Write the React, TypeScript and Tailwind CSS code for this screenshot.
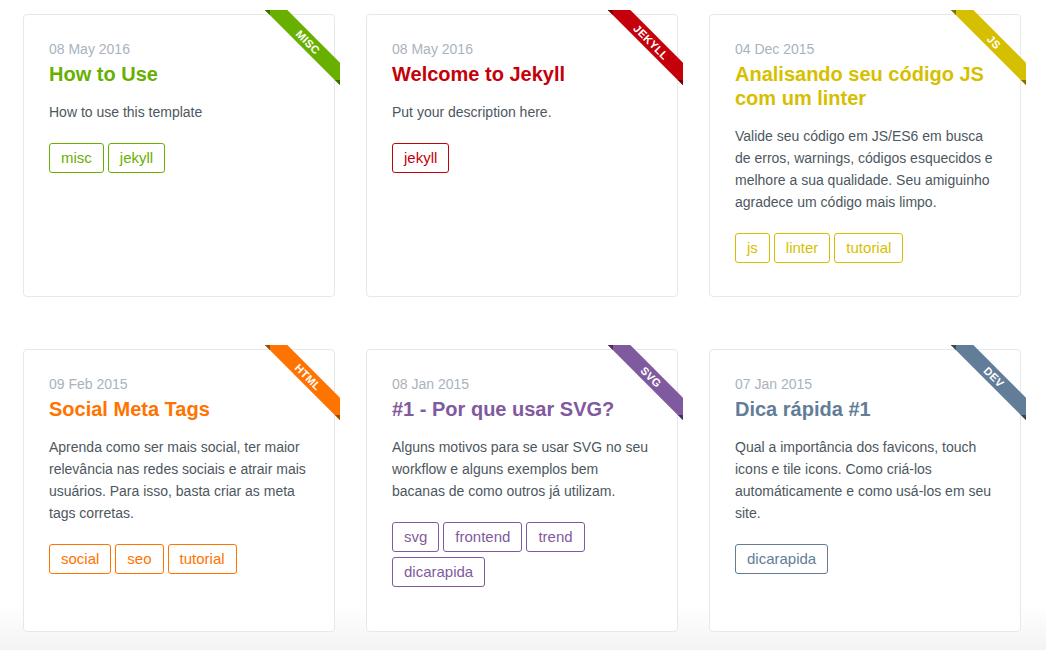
type Post = {
  date: string;
  title: string;
  description: string;
  tags: string[];
  ribbon: string;
  text: string;
  border: string;
  band: string;
  fold: string;
};

const posts: Post[] = [
  {
    date: "08 May 2016",
    title: "How to Use",
    description: "How to use this template",
    tags: ["misc", "jekyll"],
    ribbon: "MISC",
    text: "text-[#67b000]",
    border: "border-[#67b000]",
    band: "bg-[#67b000]",
    fold: "bg-[#3d6a00]",
  },
  {
    date: "08 May 2016",
    title: "Welcome to Jekyll",
    description: "Put your description here.",
    tags: ["jekyll"],
    ribbon: "JEKYLL",
    text: "text-[#c4000a]",
    border: "border-[#c4000a]",
    band: "bg-[#c4000a]",
    fold: "bg-[#750006]",
  },
  {
    date: "04 Dec 2015",
    title: "Analisando seu código JS com um linter",
    description:
      "Valide seu código em JS/ES6 em busca de erros, warnings, códigos esquecidos e melhore a sua qualidade. Seu amiguinho agradece um código mais limpo.",
    tags: ["js", "linter", "tutorial"],
    ribbon: "JS",
    text: "text-[#d6bf00]",
    border: "border-[#d6bf00]",
    band: "bg-[#d6bf00]",
    fold: "bg-[#7f7100]",
  },
  {
    date: "09 Feb 2015",
    title: "Social Meta Tags",
    description:
      "Aprenda como ser mais social, ter maior relevância nas redes sociais e atrair mais usuários. Para isso, basta criar as meta tags corretas.",
    tags: ["social", "seo", "tutorial"],
    ribbon: "HTML",
    text: "text-[#ff7300]",
    border: "border-[#ff7300]",
    band: "bg-[#ff7300]",
    fold: "bg-[#a04800]",
  },
  {
    date: "08 Jan 2015",
    title: "#1 - Por que usar SVG?",
    description:
      "Alguns motivos para se usar SVG no seu workflow e alguns exemplos bem bacanas de como outros já utilizam.",
    tags: ["svg", "frontend", "trend", "dicarapida"],
    ribbon: "SVG",
    text: "text-[#7f5a9e]",
    border: "border-[#7f5a9e]",
    band: "bg-[#7f5a9e]",
    fold: "bg-[#4a3060]",
  },
  {
    date: "07 Jan 2015",
    title: "Dica rápida #1",
    description:
      "Qual a importância dos favicons, touch icons e tile icons. Como criá-los automáticamente e como usá-los em seu site.",
    tags: ["dicarapida"],
    ribbon: "DEV",
    text: "text-[#627d98]",
    border: "border-[#627d98]",
    band: "bg-[#627d98]",
    fold: "bg-[#38485a]",
  },
];

/* ── Corner ribbon ─────────────────────────────── */
function Ribbon({ post }: { post: Post }) {
  return (
    <div className="absolute top-[-5px] right-[-6px] w-[75px] h-[75px] overflow-hidden">
      <div
        className={`absolute left-[-22px] top-[24px] w-[130px] h-[16px] rotate-45 ${post.band} text-white text-center text-[11px] font-bold leading-[16px] tracking-[0.3px]`}
      >
        {post.ribbon}
      </div>
      <div className={`absolute left-0 top-0 w-[5px] h-[5px] ${post.fold} [clip-path:polygon(0_0,100%_0,100%_100%)]`} />
      <div className={`absolute left-[70px] top-[70px] w-[5px] h-[5px] ${post.fold} [clip-path:polygon(0_0,100%_0,100%_100%)]`} />
    </div>
  );
}

/* ── Card ──────────────────────────────────────── */
function PostCard({ post }: { post: Post }) {
  return (
    <article className="relative h-[283px] bg-white border border-[#e8e8e8] rounded-[4px] pt-[25px] px-[25px]">
      <Ribbon post={post} />
      <p className="text-[14px] leading-[18px] text-[#a9b3be]">{post.date}</p>
      <h2 className={`mt-[4px] text-[20px] leading-[24px] font-bold ${post.text}`}>{post.title}</h2>
      <p className="mt-[15px] text-[14px] leading-[22px] text-[#4d5760]">{post.description}</p>
      <div className="mt-[20px] flex flex-wrap gap-x-[4px] gap-y-[5px]">
        {post.tags.map((tag) => (
          <span
            key={tag}
            className={`border ${post.border} ${post.text} rounded-[3px] px-[11px] text-[15px] leading-[28px]`}
          >
            {tag}
          </span>
        ))}
      </div>
    </article>
  );
}

export default function App() {
  return (
    <div className="min-h-[650px] font-['Liberation_Sans',Arial,sans-serif] bg-[linear-gradient(to_bottom,#ffffff_605px,#f3f3f3_650px)]">
      <div className="grid grid-cols-[312px_312px_312px] gap-x-[31px] gap-y-[52px] pl-[23px] pt-[14px]">
        {posts.map((post) => (
          <PostCard key={post.title} post={post} />
        ))}
      </div>
    </div>
  );
}
